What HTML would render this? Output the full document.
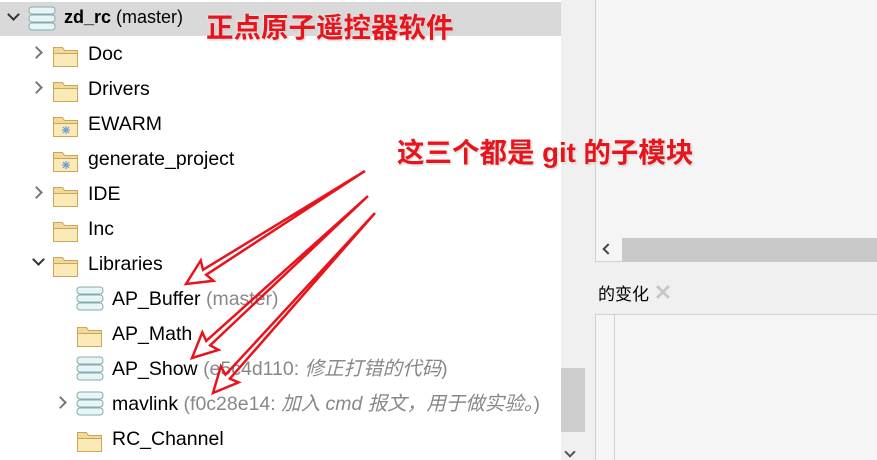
<!DOCTYPE html>
<html><head><meta charset="utf-8"><style>
*{margin:0;padding:0;box-sizing:border-box}
body{width:877px;height:460px;overflow:hidden;background:#fff;font-family:"Liberation Sans","Noto Sans CJK SC",sans-serif;position:relative}
.row{position:absolute;left:0;width:561px;height:35px;font-size:19.5px;color:#000;line-height:35px}
.row span.t{position:absolute;top:0;white-space:nowrap}
.g{color:#888}
.chev{position:absolute;top:11px;width:9px;height:9px;border-right:2px solid #777;border-bottom:2px solid #777}
.r{transform:rotate(-45deg)}.d{transform:rotate(45deg);top:8px;border-color:#333}
.ic{position:absolute;top:6px}
.ann{position:absolute;color:#e8141c;font-weight:bold;font-size:27.5px;white-space:nowrap;text-shadow:0 0 2px #fff,1px 1px 2px #bbb}
</style></head><body>
<div style="position:absolute;left:0;top:2px;width:561px;height:34px;background:#d9d9d9"></div>
<svg width="0" height="0" style="position:absolute"><defs>
<g id="fold"><path d="M1.5 4.5h9l2 3h13v16h-24z" fill="#f2d99a" stroke="#c9a65a"/><path d="M1.5 10.5h24v13h-24z" fill="#fbe9b8" stroke="#c9a65a"/></g>
<g id="repo"><rect x="1" y="1" width="26" height="7" rx="3" fill="#e6f6f8" stroke="#8aa"/><rect x="1" y="9" width="26" height="7" rx="3" fill="#e6f6f8" stroke="#8aa"/><rect x="1" y="17" width="26" height="7" rx="3" fill="#e6f6f8" stroke="#8aa"/></g>
<g id="sfold"><use href="#fold"/><path d="M14 13v8M10 17h8M11 14l6 6M17 14l-6 6" stroke="#6aa0d8" stroke-width="1.2"/></g>
</defs></svg>
<div class="row" style="top:2px;font-size:18px"><div class="chev d" style="left:9px"></div><svg class="ic" style="left:28px;top:4px" width="30" height="26"><use href="#repo"/></svg><span class="t" style="left:64px;top:-2px"><b>zd_rc</b> (master)</span></div>
<div class="row" style="top:37px"><div class="chev r" style="left:32px"></div><svg class="ic" style="left:52px" width="28" height="25"><use href="#fold"/></svg><span class="t" style="left:88px">Doc</span></div>
<div class="row" style="top:72px"><div class="chev r" style="left:32px"></div><svg class="ic" style="left:52px" width="28" height="25"><use href="#fold"/></svg><span class="t" style="left:88px">Drivers</span></div>
<div class="row" style="top:107px"><svg class="ic" style="left:52px" width="28" height="25"><use href="#sfold"/></svg><span class="t" style="left:88px">EWARM</span></div>
<div class="row" style="top:142px"><svg class="ic" style="left:52px" width="28" height="25"><use href="#sfold"/></svg><span class="t" style="left:88px">generate_project</span></div>
<div class="row" style="top:177px"><div class="chev r" style="left:32px"></div><svg class="ic" style="left:52px" width="28" height="25"><use href="#fold"/></svg><span class="t" style="left:88px">IDE</span></div>
<div class="row" style="top:212px"><svg class="ic" style="left:52px" width="28" height="25"><use href="#fold"/></svg><span class="t" style="left:88px">Inc</span></div>
<div class="row" style="top:247px"><div class="chev d" style="left:34px"></div><svg class="ic" style="left:52px" width="28" height="25"><use href="#fold"/></svg><span class="t" style="left:88px">Libraries</span></div>
<div class="row" style="top:282px"><svg class="ic" style="left:76px;top:4px" width="30" height="26"><use href="#repo"/></svg><span class="t" style="left:112px">AP_Buffer <span class="g">(master)</span></span></div>
<div class="row" style="top:317px"><svg class="ic" style="left:76px" width="28" height="25"><use href="#fold"/></svg><span class="t" style="left:112px">AP_Math</span></div>
<div class="row" style="top:352px"><svg class="ic" style="left:76px;top:4px" width="30" height="26"><use href="#repo"/></svg><span class="t" style="left:112px">AP_Show <span class="g">(e5c4d110: <i>修正打错的代码</i>)</span></span></div>
<div class="row" style="top:387px"><div class="chev r" style="left:56px"></div><svg class="ic" style="left:76px;top:4px" width="30" height="26"><use href="#repo"/></svg><span class="t" style="left:112px">mavlink <span class="g">(f0c28e14: <i>加入 cmd 报文，用于做实验。</i>)</span></span></div>
<div class="row" style="top:422px"><svg class="ic" style="left:76px" width="28" height="25"><use href="#fold"/></svg><span class="t" style="left:112px">RC_Channel</span></div>
<div style="position:absolute;left:561px;top:0;width:24px;height:460px;background:#f0f0f0"></div>
<div style="position:absolute;left:561px;top:368px;width:24px;height:64px;background:#cdcdcd"></div>
<div style="position:absolute;left:566px;top:448px;width:8px;height:8px;border-right:2px solid #555;border-bottom:2px solid #555;transform:rotate(45deg)"></div>
<div style="position:absolute;left:585px;top:0;width:292px;height:460px;background:#f0f0f0"></div>
<div style="position:absolute;left:595px;top:0;width:282px;height:262px;background:#f5f5f5;border-left:1px solid #d0d0d0;border-bottom:1px solid #d0d0d0"></div>
<div style="position:absolute;left:622px;top:238px;width:255px;height:24px;background:#c9c9c9"></div>
<div style="position:absolute;left:604px;top:245px;width:8px;height:8px;border-left:2px solid #444;border-bottom:2px solid #444;transform:rotate(45deg)"></div>
<div style="position:absolute;left:598px;top:280px;font-size:17px;color:#000">的变化 <span style="color:#c8c8c8;font-weight:bold;font-size:22px">✕</span></div>
<div style="position:absolute;left:595px;top:314px;width:282px;height:146px;background:#f5f5f5;border-left:1px solid #d0d0d0;border-top:1px solid #d0d0d0"></div>
<div style="position:absolute;left:614px;top:315px;width:1px;height:145px;background:#d0d0d0"></div>
<div class="ann" style="left:206px;top:5px">正点原子遥控器软件</div>
<div class="ann" style="left:397px;top:130px">这三个都是 git 的子模块</div>
<svg style="position:absolute;left:0;top:0" width="877" height="460" fill="none" stroke="#e8141c" stroke-width="2.5" stroke-linejoin="miter">
<path d="M365 171L206.2 274.8L213.5 280.8L186 284L200.7 260.5L203 269.8Z"/>
<path d="M368 196L210.2 345.3L218.5 349.9L192 358L202.3 332.3L206.2 340.9Z"/>
<path d="M375 213L229.9 378.7L238.6 382.4L213 393L220.8 366.4L225.5 374.7Z"/>
</svg>
</body></html>
